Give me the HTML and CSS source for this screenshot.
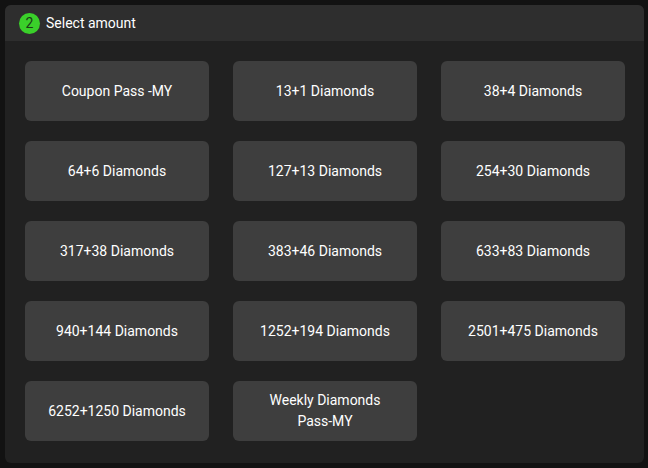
FILE: index.html
```html
<!DOCTYPE html>
<html lang="en">

<head>
    <meta charset="UTF-8">
    <meta name="viewport" content="width=device-width, initial-scale=1.0">
    <title>Select amount</title>
    <link rel="stylesheet" href="styles.css">
</head>

<body>
    <section class="panel">
        <header class="panel-head">
            <span class="step">2</span>
            <h2 class="panel-title">Select amount</h2>
        </header>
        <div class="amounts">
            <div class="amount">Coupon Pass -MY</div>
            <div class="amount">13+1 Diamonds</div>
            <div class="amount">38+4 Diamonds</div>
            <div class="amount">64+6 Diamonds</div>
            <div class="amount">127+13 Diamonds</div>
            <div class="amount">254+30 Diamonds</div>
            <div class="amount">317+38 Diamonds</div>
            <div class="amount">383+46 Diamonds</div>
            <div class="amount">633+83 Diamonds</div>
            <div class="amount">940+144 Diamonds</div>
            <div class="amount">1252+194 Diamonds</div>
            <div class="amount">2501+475 Diamonds</div>
            <div class="amount">6252+1250 Diamonds</div>
            <div class="amount">Weekly Diamonds<br>Pass-MY</div>
        </div>
    </section>
</body>

</html>
```

FILE: styles.css
```css
html {
    background-color: #121212;
}

body {
    margin: 0;
    padding: 5px 4px 5px 5px;
    font-family: Roboto, "Liberation Sans", sans-serif;
    color: #fff;
}

.panel {
    background-color: #212121;
    border-radius: 6px;
    overflow: hidden;
}

.panel-head {
    display: flex;
    align-items: center;
    gap: 6px;
    height: 36px;
    padding-left: 14px;
    background-color: #2e2e2e;
}

.step {
    display: flex;
    align-items: center;
    justify-content: center;
    width: 21px;
    height: 21px;
    border-radius: 50%;
    background-color: #3ad02a;
    color: #1c3a18;
    font-size: 14px;
}

.panel-title {
    margin: 0;
    font-size: 14px;
    font-weight: 400;
}

.amounts {
    display: grid;
    grid-template-columns: repeat(3, 184px);
    gap: 20px 24px;
    padding: 20px 20px 22px;
}

.amount {
    display: flex;
    align-items: center;
    justify-content: center;
    height: 60px;
    background-color: #3e3e3e;
    border-radius: 6px;
    font-size: 14px;
    line-height: 21px;
    text-align: center;
}
```
